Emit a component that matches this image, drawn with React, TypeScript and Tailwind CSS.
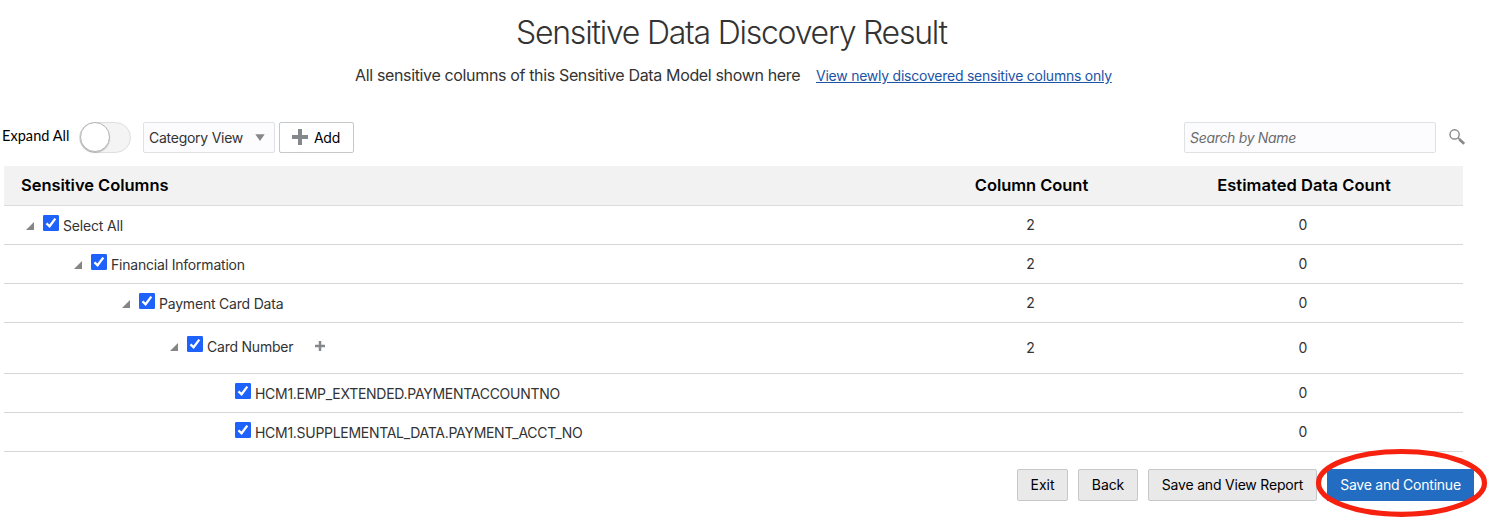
import React from "react";

type Row = {
  label: string;
  indent: string;
  columns?: string;
  data: string;
  parent?: boolean;
  addable?: boolean;
  spacing: string;
};

const rows: Row[] = [
  { label: "Select All", indent: "pl-[22px]", columns: "2", data: "0", parent: true, spacing: "tracking-[-0.18px]" },
  { label: "Financial Information", indent: "pl-[70px]", columns: "2", data: "0", parent: true, spacing: "tracking-[-0.2px]" },
  { label: "Payment Card Data", indent: "pl-[118px]", columns: "2", data: "0", parent: true, spacing: "tracking-[-0.2px]" },
  { label: "Card Number", indent: "pl-[166px]", columns: "2", data: "0", parent: true, addable: true, spacing: "tracking-[-0.22px]" },
  { label: "HCM1.EMP_EXTENDED.PAYMENTACCOUNTNO", indent: "pl-[231px]", data: "0", spacing: "tracking-[-0.28px]" },
  { label: "HCM1.SUPPLEMENTAL_DATA.PAYMENT_ACCT_NO", indent: "pl-[231px]", data: "0", spacing: "tracking-[-0.29px]" },
];

function Check() {
  return (
    <svg className="mb-[5px] block h-4 w-4 shrink-0" viewBox="0 0 16 16" role="checkbox" aria-checked="true">
      <rect width="16" height="16" rx="1.2" fill="#1f62fb" />
      <path d="M3.5 8.3 6.6 11.3 12.3 3.6" fill="none" stroke="#fff" strokeWidth="2.3" />
    </svg>
  );
}

function Plus({ className, thick }: { className: string; thick: number }) {
  return (
    <svg className={className} viewBox="0 0 16 16">
      <path d="M8 0V16M0 8H16" stroke="#84888c" strokeWidth={thick} />
    </svg>
  );
}

function TreeRow({ row }: { row: Row }) {
  return (
    <div
      className={`grid grid-cols-[889px_274px_296px] items-center border-b border-[#d6d6d6] text-sm text-[#333] ${row.addable ? "h-[51px]" : "h-[39px]"}`}
    >
      <div className={`flex items-center ${row.indent} ${row.addable ? "pb-[3px]" : ""}`}>
        {row.parent && (
          <svg className="mr-[9px] mt-px block h-2 w-2 shrink-0" viewBox="0 0 8 8">
            <path d="M8 0V8H0Z" fill="#858585" />
          </svg>
        )}
        <Check />
        <span className={`ml-1 mt-px whitespace-nowrap leading-4 ${row.spacing}`}>{row.label}</span>
        {row.addable && <Plus className="mb-px ml-[22px] block h-2.5 w-2.5" thick={4} />}
      </div>
      <div className="pl-px text-center">{row.columns}</div>
      <div className="pr-[24px] text-center">{row.data}</div>
    </div>
  );
}

export default function App() {
  return (
    <div className="relative h-[517px] w-[1490px] overflow-hidden bg-white font-['Inter',sans-serif] text-sm text-[#333]">
      <header className="flex h-[122px] flex-col">
        <h1 className="whitespace-nowrap pl-[516px] pt-[13px] text-[32px] font-[330] leading-10 tracking-[-1.24px]">
          Sensitive Data Discovery Result
        </h1>
        <div className="mt-[10px] flex items-center pl-[355px] leading-5">
          <p className="w-[461px] whitespace-nowrap text-base leading-5 tracking-[-0.35px]">
            All sensitive columns of this Sensitive Data Model shown here
          </p>
          <a className="mt-[3px] whitespace-nowrap text-sm leading-5 tracking-[-0.24px] text-[#1d53a5] underline" href="#">
            View newly discovered sensitive columns only
          </a>
        </div>
      </header>

      <div className="flex h-[44px] items-start">
        <span className="ml-[2px] w-[77px] whitespace-nowrap pt-1 font-['Lato',sans-serif] text-[14.5px] leading-5 tracking-[0.05px] text-black">
          Expand All
        </span>
        <div className="h-[31px] w-[52px] rounded-full border border-[#dedede] bg-[#f4f4f4]">
          <div className="-mt-px h-[30px] w-[30px] rounded-full border border-[#b5b5b5] bg-white shadow-[0_1px_1px_rgba(0,0,0,0.2)]" />
        </div>
        <div className="ml-3 flex h-[31px] w-[132px] items-center justify-between rounded-[2px] border border-[#dfe2e4] bg-[#fcfcfe] pl-[5px] pr-[9px]">
          <span className="whitespace-nowrap tracking-[-0.26px]">Category View</span>
          <svg className="h-[7px] w-[10px]" viewBox="0 0 10 7">
            <path d="M0.3 0.3H9.7L5 7Z" fill="#85888b" />
          </svg>
        </div>
        <button className="ml-1 flex h-[31px] w-[75px] items-center rounded-[2px] border border-[#c4c8cb] bg-white pl-3 text-black">
          <Plus className="mb-px h-4 w-4" thick={4} />
          <span className="ml-[6px] tracking-[-0.3px]">Add</span>
        </button>
        <input
          className="ml-[830px] h-[31px] w-[252px] rounded-[2px] border border-[#dfe2e4] bg-[#fcfcfe] px-[5px] text-sm italic tracking-[-0.32px] placeholder:text-[#6b6b6b]"
          placeholder="Search by Name"
        />
        <svg className="ml-[13px] mt-[7px] h-4 w-4" viewBox="0 0 16 16" fill="none" stroke="#888">
          <circle cx="5.6" cy="5.4" r="4.6" strokeWidth="1.4" />
          <path d="M8.9 8.7 11 10.7" strokeWidth="1.4" />
          <path d="M10.3 10.2 15.2 14.8" strokeWidth="2.7" />
        </svg>
      </div>

      <main className="ml-1 w-[1459px]">
        <div className="grid h-10 grid-cols-[889px_274px_296px] items-center border-b border-[#dcdcdc] bg-[#f2f2f2] text-[16.5px] font-semibold text-black">
          <div className="pl-[17px] tracking-[-0.03px]">Sensitive Columns</div>
          <div className="pl-[3px] text-center tracking-[-0.05px]">Column Count</div>
          <div className="pr-[22px] text-center tracking-[0.05px]">Estimated Data Count</div>
        </div>
        {rows.map((row) => (
          <TreeRow key={row.label} row={row} />
        ))}
      </main>

      <footer className="mt-[17px] flex h-8 gap-[10px] whitespace-nowrap pl-[1017px] text-black">
        <button className="w-[51px] shrink-0 rounded-[2px] border border-[#c4c8cb] bg-[#e9e9e9]">Exit</button>
        <button className="w-[60px] shrink-0 rounded-[2px] border border-[#c4c8cb] bg-[#e9e9e9] tracking-[-0.1px]">Back</button>
        <button className="w-[169px] shrink-0 rounded-[2px] border border-[#c4c8cb] bg-[#e9e9e9] tracking-[-0.2px]">
          Save and View Report
        </button>
        <button className="w-[147px] shrink-0 bg-[#226dc1] tracking-[-0.23px] text-white">Save and Continue</button>
      </footer>

      <svg className="pointer-events-none absolute left-[1314px] top-[447px] h-[70px] w-[176px]" viewBox="0 0 176 70">
        <ellipse cx="87.5" cy="35.9" rx="83" ry="31.4" fill="none" stroke="#f6210f" strokeWidth="5.2" />
      </svg>
    </div>
  );
}
